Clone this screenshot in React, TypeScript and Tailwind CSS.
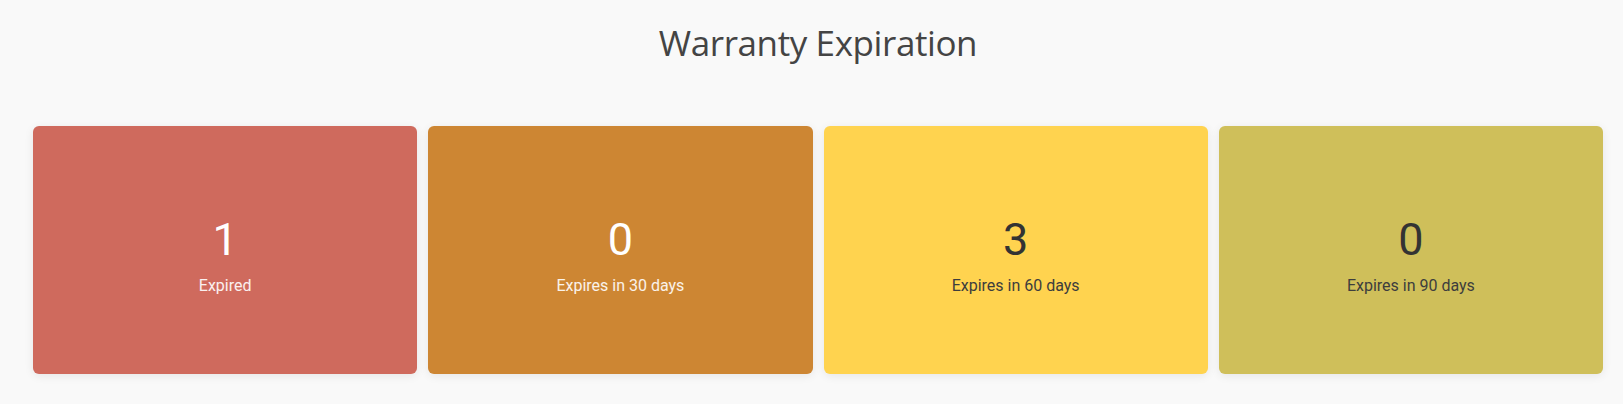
const cards = [
  { value: 1, label: "Expired", bg: "bg-[#cf6a5d]", text: "text-white", sub: "text-white/90" },
  { value: 0, label: "Expires in 30 days", bg: "bg-[#cd8633]", text: "text-white", sub: "text-white/90" },
  { value: 3, label: "Expires in 60 days", bg: "bg-[#ffd34f]", text: "text-[#333333]", sub: "text-[#3d3d3d]" },
  { value: 0, label: "Expires in 90 days", bg: "bg-[#cfbf5a]", text: "text-[#333333]", sub: "text-[#3d3d3d]" },
];

export default function App() {
  return (
    <div className="min-h-[404px] bg-[#f9f9f9] pl-[33px] pr-[20px] pt-[19px] font-['Roboto',sans-serif]">
      <h1 className="text-center text-[35px] leading-[48px] text-[#444444] font-['Open_Sans',sans-serif] tracking-[-0.4px]">
        Warranty Expiration
      </h1>
      <div className="mt-[59px] grid grid-cols-4 gap-[11px]">
        {cards.map((c, i) => (
          <div
            key={i}
            className={`${c.bg} h-[248px] pt-[12px] rounded-[6px] shadow-[0_2px_10px_rgba(0,0,0,0.08)] flex flex-col items-center justify-center`}
          >
            <div className={`${c.text} text-[45px] leading-[52px] mt-[-2px]`}>{c.value}</div>
            <div className={`${c.sub} text-[16px] leading-[20px] mt-[10px]`}>{c.label}</div>
          </div>
        ))}
      </div>
    </div>
  );
}
